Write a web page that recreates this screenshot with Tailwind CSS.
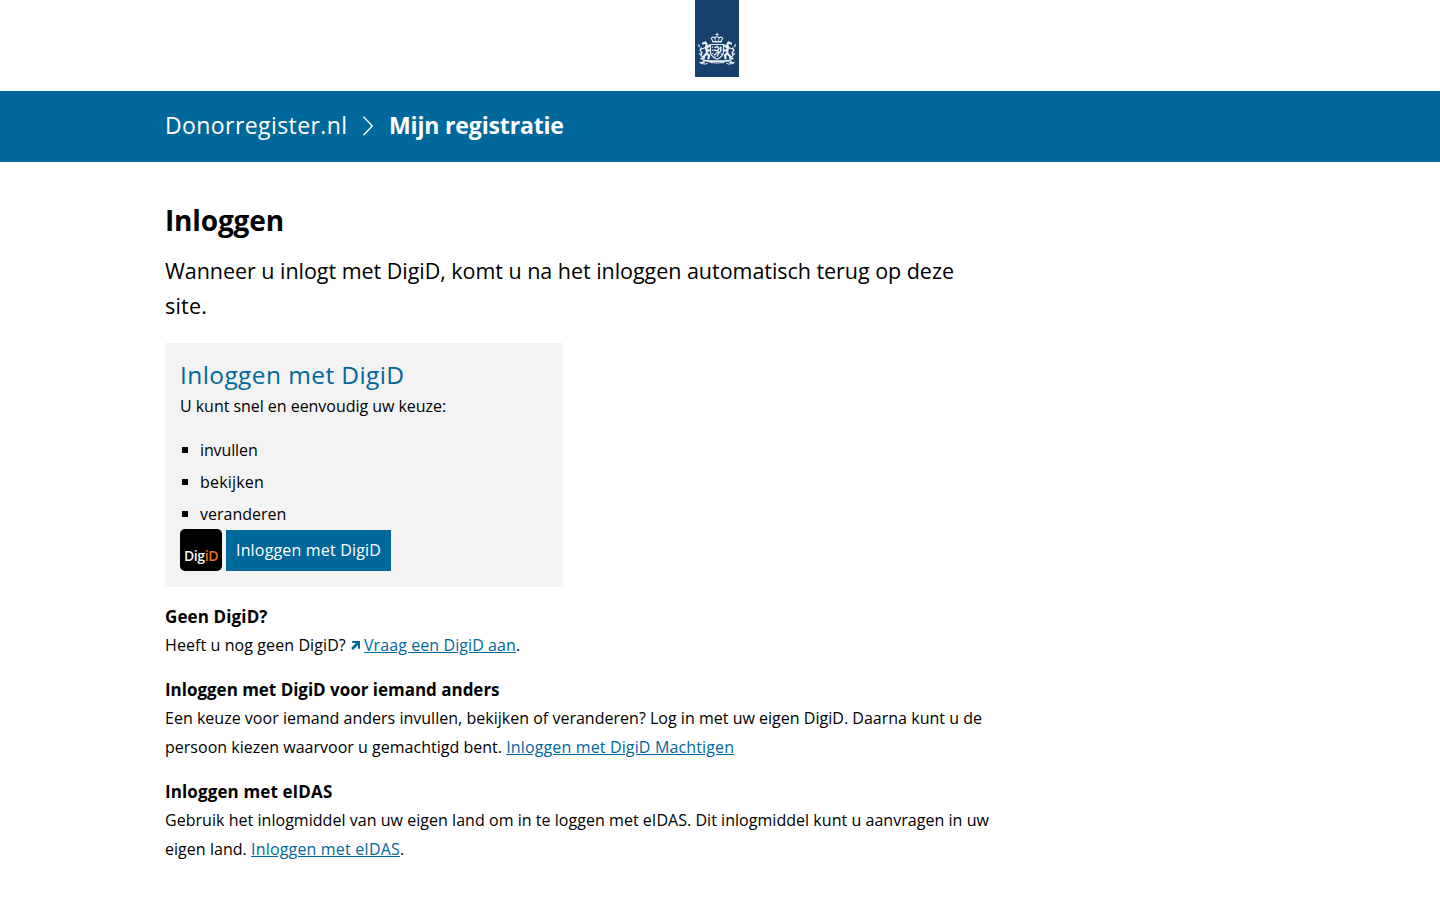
<!DOCTYPE html>
<html lang="nl">
<head>
<meta charset="utf-8">
<title>Inloggen - Mijn registratie</title>
<script src="https://cdn.jsdelivr.net/npm/@tailwindcss/browser@4"></script>
</head>
<body class="h-[900px] overflow-hidden bg-white font-['Open_Sans',sans-serif] text-base leading-[29px] text-black">
<header>
  <div class="flex h-[91px] items-start pl-[695px]">
    <svg class="h-[77px] w-11" viewBox="0 0 44 77" aria-label="Rijksoverheid">
      <rect width="44" height="77" fill="#17406f"/>
      <g fill="none" stroke="#e8eef5" stroke-linecap="round" stroke-linejoin="round">
        <path d="M22 33.2v3M20.8 34.5h2.4" stroke-width=".9"/>
        <path d="M18 41.3 16.2 38.3q2-2.2 3.8-.4 2-2.4 4 0 2-1.8 3.8.4L26 41.3" stroke-width="1.1"/>
        <path d="M20 38.5l.5 2M24 38.5l-.5 2" stroke-width=".8"/>
        <path d="M17.8 41.8h8.4" stroke-width="1.5"/>
        <path id="lion" d="M8 43.5l2.5-1 1.2 2.3-.9 2.7 1.2 3.3-.4 2.7-2.4 2.5-.7 2.6H6.5M11.5 48l3-2.5M11.5 50.8l2.8-.5M11.3 53.5l2.9 1.8-.8 3.2" stroke-width="2.2"/>
        <path id="tail" d="M8.6 57.2 6 55.7 7 52.7 5 50.4l1.2-2.5M9.8 47.8 6.5 49M5.3 54.1l-.8-.5M4.3 46.6l-.6-1.8" stroke-width="1.3"/>
        <use href="#lion" transform="matrix(-1 0 0 1 44 0)"/>
        <use href="#tail" transform="matrix(-1 0 0 1 44 0)"/>
        <path d="M15.5 44.5h13v7.3q0 4.7-6.5 7.4-6.5-2.7-6.5-7.4z" stroke-width="1.2"/>
        <path d="M20 47.5l2.5-1 1.6 2-1.5 2 1.3 2.5-1.6 3M19 50.2l3.4.5M19.5 55l2.5-2.2M25.8 47v4l-1.2 1.3" stroke-width="1.5"/>
        <path d="M17.5 47h.1M17.5 50.2h.1M17.8 53.5h.1M26.4 54h.1M20 57h.1" stroke-width="1.3"/>
        <path d="M9 60.6q13 1.2 26 0" stroke-width="1.8"/>
        <path d="M9 60.6l-1.7 1.2 2.3.9-5-.3 1.2 1.1 4.8.6 1.8-.8M35 60.6l1.7 1.2-2.3.9 5-.3-1.2 1.1-4.8.6-1.8-.8M15 62.6q7 .8 14 0" stroke-width="1"/>
      </g>
    </svg>
  </div>
  <nav class="flex h-[71px] items-center bg-[#01689b] pb-[3px] pl-[165px] text-[23px] leading-[35px] text-white">
    <a class="w-[197px] tracking-[0.41px]">Donorregister.nl</a>
    <svg class="mt-0.5 h-5 w-3" viewBox="0 0 12 20" fill="none" stroke="white" stroke-width="1.3"><path d="M1.5.7 10.3 10 1.5 19.3"/></svg>
    <a class="ml-[15px] font-bold tracking-[-0.15px]">Mijn registratie</a>
  </nav>
</header>
<main class="ml-[165px] w-[830px] whitespace-nowrap pt-[38px]">
  <h1 class="text-[28px] font-bold leading-10 tracking-[-0.15px]">Inloggen</h1>
  <p class="mt-[13px] text-[21.5px] leading-[35px] tracking-[-0.04px]">Wanneer u inlogt met DigiD, komt u na het inloggen automatisch terug op deze<br><span class="tracking-[0.2px]">site.</span></p>
  <section class="mt-5 h-[244px] w-[398px] bg-[#f3f3f3] p-[15px]">
    <h2 class="text-[24.5px] leading-[33px] tracking-[0.4px] text-[#01689b]">Inloggen met DigiD</h2>
    <p class="pt-px tracking-[-0.04px]">U kunt snel en eenvoudig uw keuze:</p>
    <ul class="mt-[13px] leading-8">
      <li class="flex items-center gap-3 pl-0.5"><span class="size-1.5 bg-black"></span><span class="tracking-[-0.12px]">invullen</span></li>
      <li class="flex items-center gap-3 pl-0.5"><span class="size-1.5 bg-black"></span><span class="tracking-[0.19px]">bekijken</span></li>
      <li class="flex items-center gap-3 pl-0.5"><span class="size-1.5 bg-black"></span><span>veranderen</span></li>
    </ul>
    <div class="-mt-px flex items-end gap-1">
      <div class="flex size-[42px] items-end justify-center rounded-[5px] bg-black pb-[5px] text-sm font-semibold leading-5 tracking-[-0.4px] text-gray-100"><span>Dig<span class="text-[#e17020]">iD</span></span></div>
      <button class="h-[41px] w-[165px] bg-[#01689b] text-center tracking-[0.17px] text-white">Inloggen met DigiD</button>
    </div>
  </section>
  <section class="mt-[15px]">
    <h3 class="text-[17px] font-bold tracking-[0.12px]">Geen DigiD?</h3>
    <p class="flex items-center"><span class="w-[186px] tracking-[0.09px]">Heeft u nog geen DigiD?</span><svg class="mr-1 h-[9px] w-[9px]" viewBox="0 0 9 9"><path d="M1.2 0H9v7.8H7V3.9L2 9 .2 7.1 5 2.1H1.2z" fill="#01689b"/></svg><a class="text-[#01689b] underline underline-offset-1 tracking-[0.08px]">Vraag een DigiD aan</a>.</p>
  </section>
  <section class="mt-[15px]">
    <h3 class="text-[17px] font-bold tracking-[-0.02px]">Inloggen met DigiD voor iemand anders</h3>
    <p><span class="tracking-[0.017px]">Een keuze voor iemand anders invullen, bekijken of veranderen? Log in met uw eigen DigiD. Daarna kunt u de</span><br><span class="tracking-[0.015px]">persoon kiezen waarvoor u gemachtigd bent. </span><a class="text-[#01689b] underline underline-offset-1 tracking-[0.14px]">Inloggen met DigiD Machtigen</a></p>
  </section>
  <section class="mt-[15px]">
    <h3 class="text-[17px] font-bold tracking-[0.12px]">Inloggen met eIDAS</h3>
    <p><span class="tracking-[0.038px]">Gebruik het inlogmiddel van uw eigen land om in te loggen met eIDAS. Dit inlogmiddel kunt u aanvragen in uw</span><br><span class="tracking-[0.04px]">eigen land. </span><a class="text-[#01689b] underline underline-offset-1 tracking-[0.17px]">Inloggen met eIDAS</a>.</p>
  </section>
</main>
</body>
</html>
